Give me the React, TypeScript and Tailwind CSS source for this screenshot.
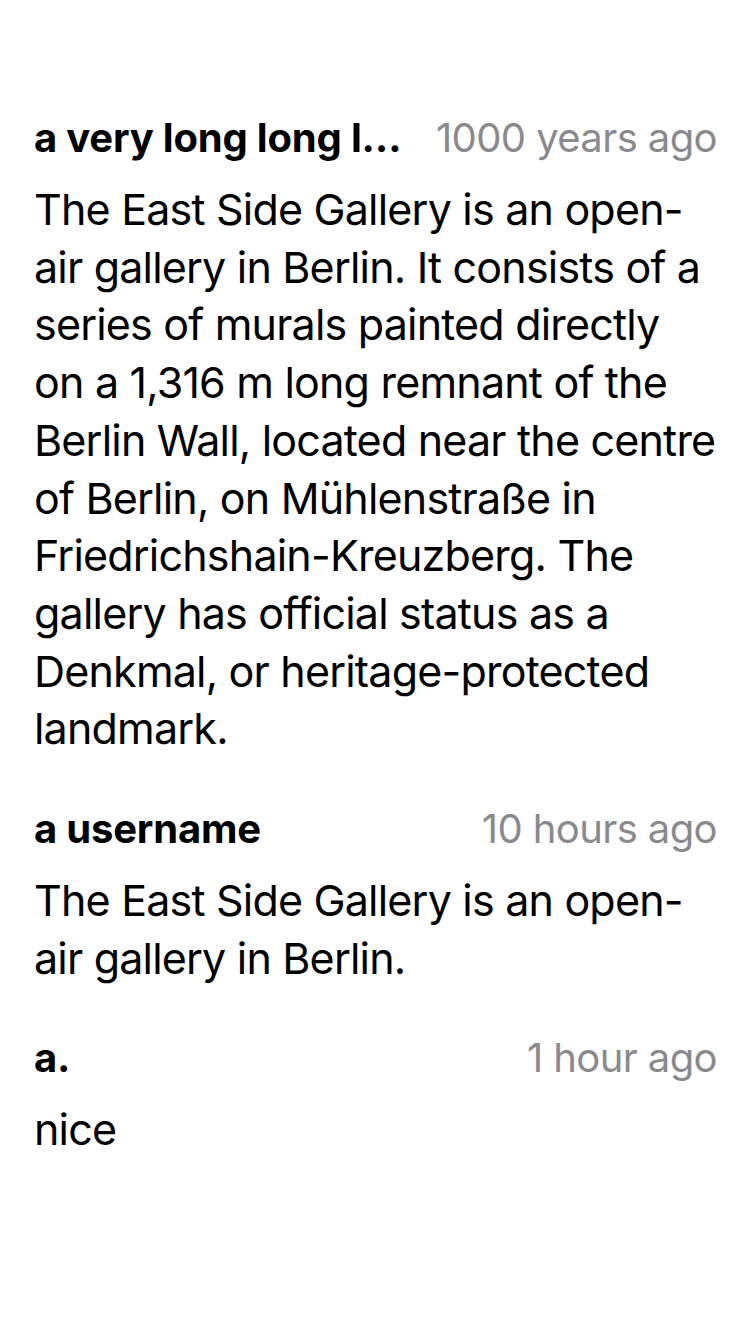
import React from "react";

const comments = [
  {
    user: "a very long long l…",
    time: "1000 years ago",
    lines: [
      "The East Side Gallery is an open-",
      "air gallery in Berlin. It consists of a",
      "series of murals painted directly",
      "on a 1,316 m long remnant of the",
      "Berlin Wall, located near the centre",
      "of Berlin, on Mühlenstraße in",
      "Friedrichshain-Kreuzberg. The",
      "gallery has official status as a",
      "Denkmal, or heritage-protected",
      "landmark.",
    ],
  },
  {
    user: "a username",
    time: "10 hours ago",
    lines: ["The East Side Gallery is an open-", "air gallery in Berlin."],
  },
  { user: "a.", time: "1 hour ago", lines: ["nice"] },
];

export default function App() {
  return (
    <div
      className="min-h-[1334px] w-[750px] bg-white pl-[34px] pr-[33px] pt-[114px] text-black"
      style={{ fontFamily: "Inter, 'Liberation Sans', sans-serif" }}
    >
      {comments.map((c, i) => (
        <div key={i} className="mb-[47px]">
          <div className="flex h-[48px] items-center justify-between gap-[20px]">
            <div className="min-w-0 whitespace-nowrap text-[40px] font-bold leading-[48px] tracking-[-0.2px]">
              {c.user}
            </div>
            <div className="shrink-0 whitespace-nowrap text-[40px] leading-[48px] tracking-[-0.6px] text-[#8a8a8e]">
              {c.time}
            </div>
          </div>
          <p className="mt-[19px] text-[43px] leading-[57.7px] tracking-[-0.8px]">
            {c.lines.map((l, j) => (
              <span key={j} className="block whitespace-nowrap">
                {l}
              </span>
            ))}
          </p>
        </div>
      ))}
    </div>
  );
}
